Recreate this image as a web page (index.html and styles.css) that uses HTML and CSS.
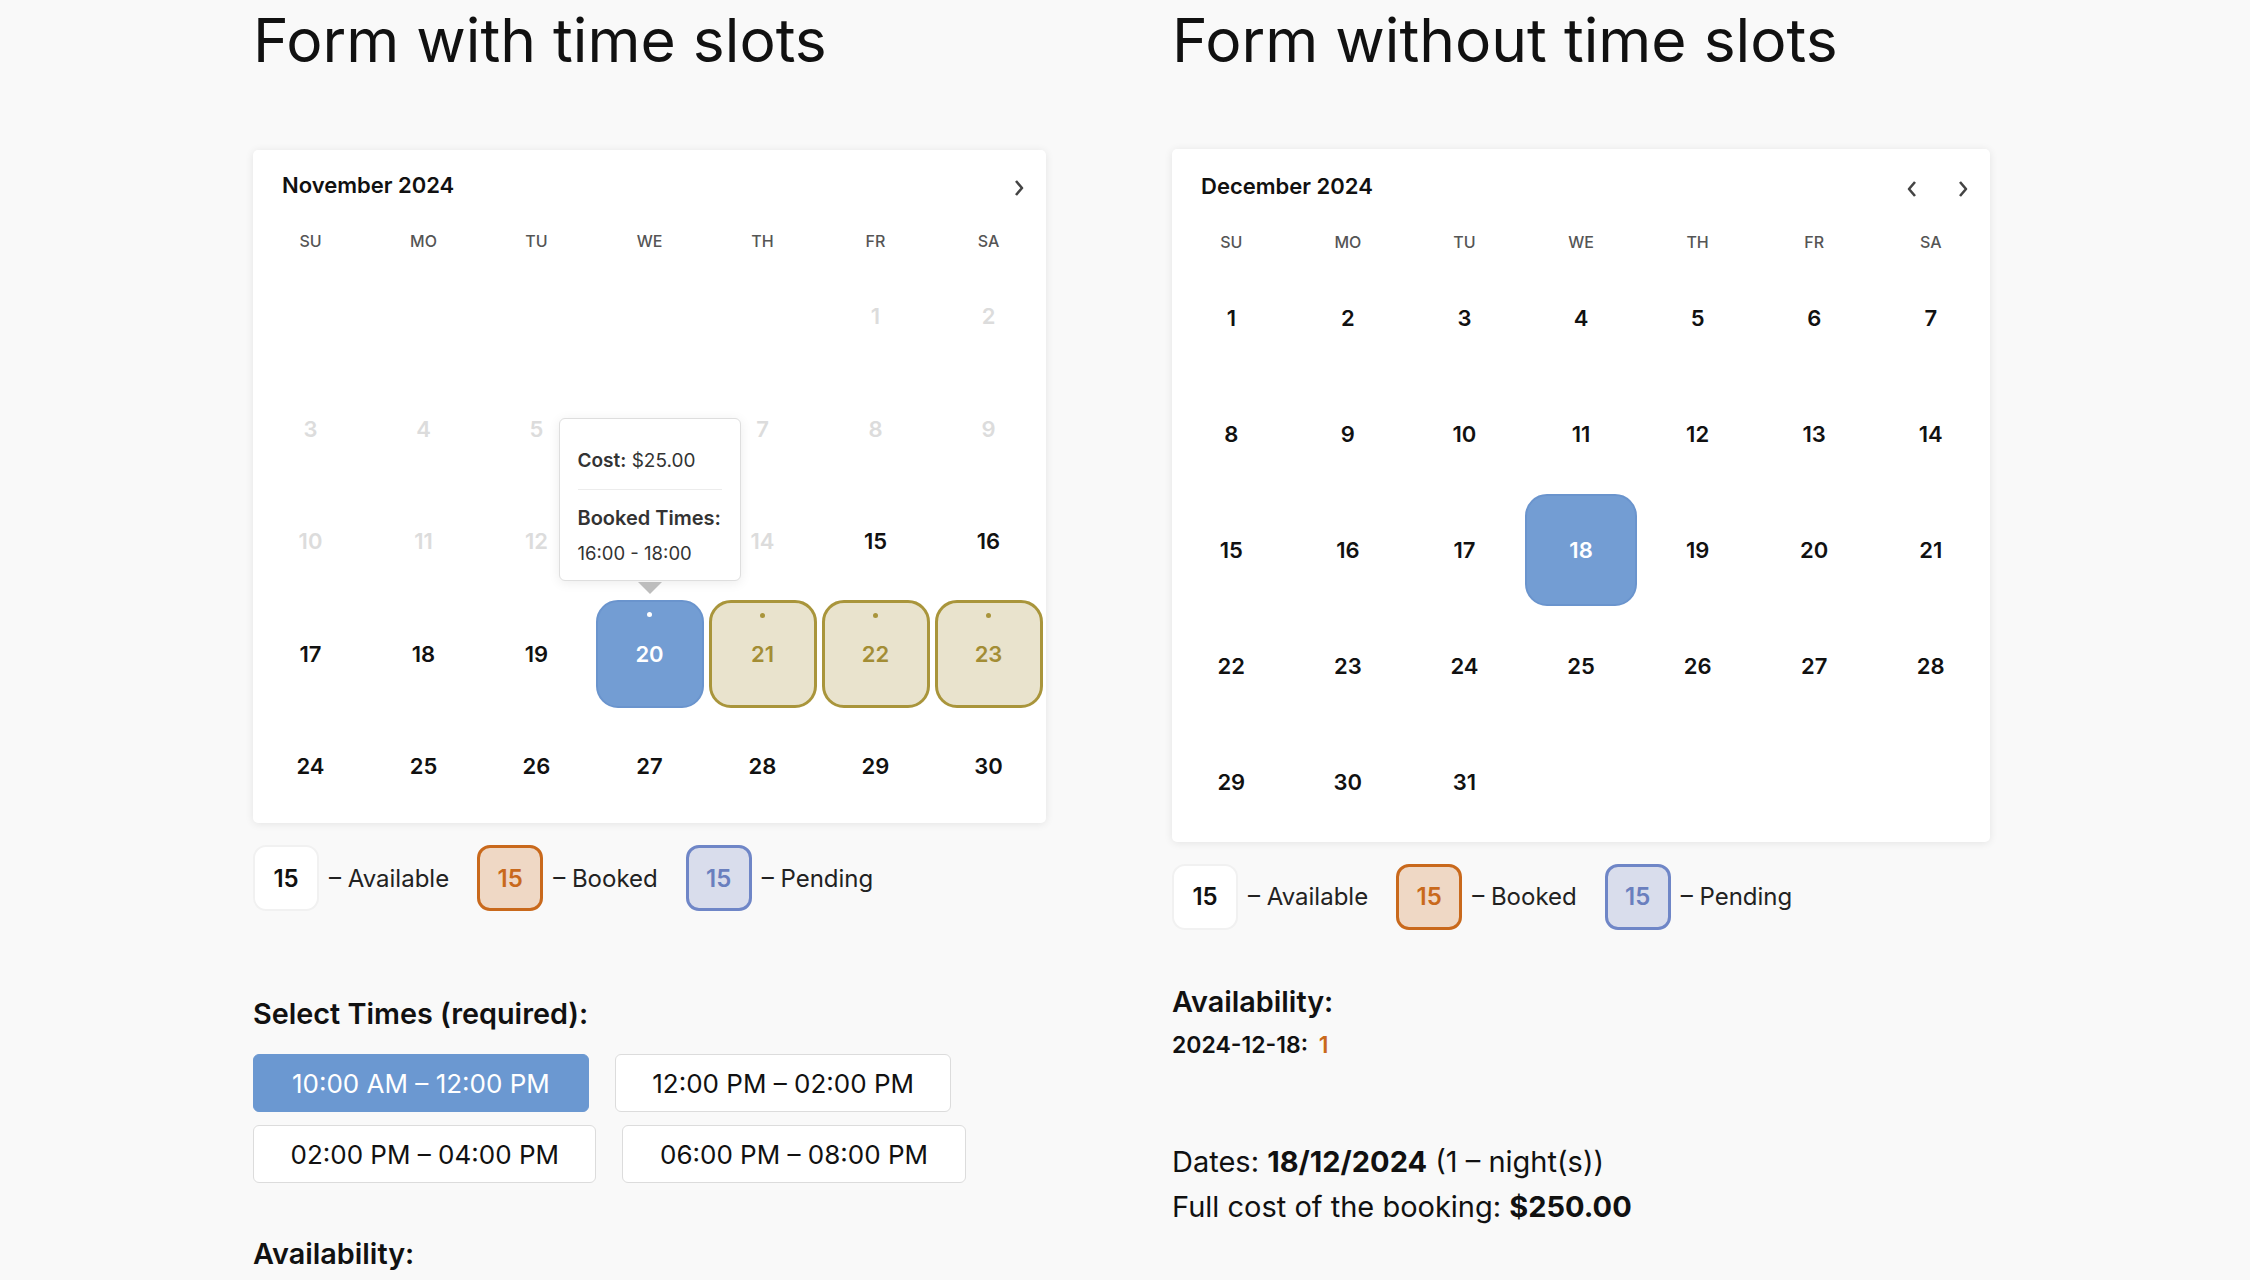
FILE: index.html
```html
<!DOCTYPE html>
<html>
<head>
    <title>Booking forms</title>
    <link rel="stylesheet" href="styles.css">
</head>
<body>
    <div class="page">
        <!-- form with time slots -->
        <section class="col col-slots">
            <h1 class="title">Form with time slots</h1>
            <div class="cal">
                <div class="cal-head">
                    <span class="cal-month">November 2024</span>
                    <div class="cal-nav">
                        <span class="nav-btn"><svg width="10" height="18" viewBox="0 0 10 18"><path d="M2 2 L8 9 L2 16" /></svg></span>
                    </div>
                </div>
                <div class="cal-week">
                    <div>SU</div><div>MO</div><div>TU</div><div>WE</div><div>TH</div><div>FR</div><div>SA</div>
                </div>
                <div class="cal-days">
                    <div class="day"></div><div class="day"></div><div class="day"></div><div class="day"></div><div class="day"></div>
                    <div class="day past">1</div><div class="day past">2</div>
                    <div class="day past">3</div><div class="day past">4</div><div class="day past">5</div><div class="day past">6</div><div class="day past">7</div><div class="day past">8</div><div class="day past">9</div>
                    <div class="day past">10</div><div class="day past">11</div><div class="day past">12</div><div class="day past">13</div><div class="day past">14</div><div class="day">15</div><div class="day">16</div>
                    <div class="day">17</div><div class="day">18</div><div class="day">19</div>
                    <div class="day selected has-dot">20
                        <div class="tip">
                            <div class="tip-cost"><b>Cost:</b> $25.00</div>
                            <div class="tip-label">Booked Times:</div>
                            <div class="tip-time">16:00 - 18:00</div>
                        </div>
                    </div>
                    <div class="day booked has-dot">21</div><div class="day booked has-dot">22</div><div class="day booked has-dot">23</div>
                    <div class="day">24</div><div class="day">25</div><div class="day">26</div><div class="day">27</div><div class="day">28</div><div class="day">29</div><div class="day">30</div>
                </div>
            </div>

            <div class="legend">
                <div class="legend-item"><span class="legend-box available">15</span><span>– Available</span></div>
                <div class="legend-item"><span class="legend-box booked-box">15</span><span>– Booked</span></div>
                <div class="legend-item"><span class="legend-box pending">15</span><span>– Pending</span></div>
            </div>

            <h3 class="label label-times">Select Times (required):</h3>
            <div class="slots">
                <button class="slot active">10:00 AM – 12:00 PM</button>
                <button class="slot">12:00 PM – 02:00 PM</button>
                <button class="slot">02:00 PM – 04:00 PM</button>
                <button class="slot">06:00 PM – 08:00 PM</button>
            </div>
            <h3 class="label label-avail-left">Availability:</h3>
        </section>

        <!-- form without time slots -->
        <section class="col col-plain">
            <h1 class="title">Form without time slots</h1>
            <div class="cal cal-wide">
                <div class="cal-head">
                    <span class="cal-month">December 2024</span>
                    <div class="cal-nav">
                        <span class="nav-btn"><svg width="10" height="18" viewBox="0 0 10 18"><path d="M8 2 L2 9 L8 16" /></svg></span>
                        <span class="nav-btn"><svg width="10" height="18" viewBox="0 0 10 18"><path d="M2 2 L8 9 L2 16" /></svg></span>
                    </div>
                </div>
                <div class="cal-week">
                    <div>SU</div><div>MO</div><div>TU</div><div>WE</div><div>TH</div><div>FR</div><div>SA</div>
                </div>
                <div class="cal-days">
                    <div class="day">1</div><div class="day">2</div><div class="day">3</div><div class="day">4</div><div class="day">5</div><div class="day">6</div><div class="day">7</div>
                    <div class="day">8</div><div class="day">9</div><div class="day">10</div><div class="day">11</div><div class="day">12</div><div class="day">13</div><div class="day">14</div>
                    <div class="day">15</div><div class="day">16</div><div class="day">17</div><div class="day selected">18</div><div class="day">19</div><div class="day">20</div><div class="day">21</div>
                    <div class="day">22</div><div class="day">23</div><div class="day">24</div><div class="day">25</div><div class="day">26</div><div class="day">27</div><div class="day">28</div>
                    <div class="day">29</div><div class="day">30</div><div class="day">31</div><div class="day"></div><div class="day"></div><div class="day"></div><div class="day"></div>
                </div>
            </div>

            <div class="legend">
                <div class="legend-item"><span class="legend-box available">15</span><span>– Available</span></div>
                <div class="legend-item"><span class="legend-box booked-box">15</span><span>– Booked</span></div>
                <div class="legend-item"><span class="legend-box pending">15</span><span>– Pending</span></div>
            </div>

            <h3 class="label label-avail">Availability:</h3>
            <div class="avail-row">2024-12-18: <span class="avail-count">1</span></div>

            <div class="summary">
                <div>Dates: <b>18/12/2024</b> (1 – night(s))</div>
                <div>Full cost of the booking: <b>$250.00</b></div>
            </div>
        </section>
    </div>
</body>
</html>
```

FILE: styles.css
```css
body {
    margin: 0;
    background-color: #f9f9f9;
    font-family: Inter, "Noto Sans", Arial, sans-serif;
    color: #111;
}
.page {
    display: flex;
    padding-left: 253px;
    height: 1280px;
    overflow: hidden;
}
.col-slots {
    width: 919px;
}
.col-plain {
    width: 818px;
}
.title {
    margin: 4px 0 74px;
    font-size: 60.5px;
    line-height: 72px;
    font-weight: 400;
    color: #111;
}

/* calendar card */
.cal {
    width: 793px;
    background: #fff;
    border-radius: 5px;
    box-shadow: 0 1px 8px rgba(0, 0, 0, 0.09);
    padding-bottom: 3px;
}
.cal-wide {
    width: 818px;
    padding-bottom: 4px;
}
.col-plain .cal {
    margin-top: -1px;
}
.cal-head {
    display: flex;
    align-items: center;
    justify-content: space-between;
    height: 70px;
    padding: 0 22px 0 29px;
}
.cal-wide .cal-head {
    padding-top: 2px;
}
.cal-month {
    font-size: 22px;
    font-weight: 600;
    color: #111;
}
.cal-nav {
    display: flex;
    gap: 41px;
    padding-top: 5px;
}
.nav-btn svg {
    display: block;
}
.nav-btn path {
    fill: none;
    stroke: #444;
    stroke-width: 2.6;
    stroke-linejoin: round;
}
.cal-week,
.cal-days {
    display: grid;
    grid-template-columns: repeat(7, 1fr);
    column-gap: 5px;
    margin: 0 3.5px;
}
.cal-week {
    height: 42px;
    align-items: center;
    text-align: center;
    font-size: 16px;
    font-weight: 500;
    color: #555;
}
.cal-wide .cal-week {
    height: 41px;
}
.cal-days {
    row-gap: 4.5px;
}
.day {
    position: relative;
    aspect-ratio: 1;
    display: flex;
    align-items: center;
    justify-content: center;
    font-size: 22px;
    font-weight: 600;
    color: #111;
    border-radius: 22px;
    box-sizing: border-box;
}
.day.past {
    color: #dcdcdc;
}
.day.selected {
    background-color: #739dd3;
    border: 2px solid #6a94cd;
    color: #fff;
}
.day.booked {
    background-color: #e9e3cd;
    border: 3px solid #a9953b;
    color: #a38d35;
}
.day.has-dot::before {
    content: "";
    position: absolute;
    top: 10px;
    left: 50%;
    width: 5px;
    height: 5px;
    margin-left: -2.5px;
    border-radius: 50%;
    background: #a9953b;
}
.day.selected.has-dot::before {
    background: #fff;
}

/* tooltip over day 20 */
.tip {
    position: absolute;
    bottom: calc(100% + 21px);
    left: 50%;
    width: 182px;
    margin-left: -91px;
    box-sizing: border-box;
    padding: 29px 18px 13.5px;
    background: #fff;
    border: 1px solid #dedede;
    border-radius: 6px;
    box-shadow: 0 2px 12px rgba(0, 0, 0, 0.08);
    color: #333;
    font-weight: 400;
    text-align: left;
    z-index: 2;
}
.tip::after {
    content: "";
    position: absolute;
    top: calc(100% + 2px);
    left: 50%;
    margin-left: -12px;
    border-left: 12px solid transparent;
    border-right: 12px solid transparent;
    border-top: 12px solid #bdbdbd;
}
.tip-cost {
    font-size: 19px;
    line-height: 26px;
    padding-bottom: 15px;
    border-bottom: 1px solid #ececec;
    white-space: nowrap;
}
.tip-cost b {
    font-weight: 600;
}
.tip-label {
    margin-top: 14px;
    font-size: 20px;
    font-weight: 600;
    line-height: 28px;
    white-space: nowrap;
}
.tip-time {
    margin-top: 8px;
    font-size: 18.5px;
    line-height: 26px;
    white-space: nowrap;
}

/* legend */
.legend {
    display: flex;
    align-items: center;
    margin-top: 22px;
    font-size: 24px;
    color: #222;
}
.legend-item {
    display: flex;
    align-items: center;
    gap: 10px;
    margin-right: 28px;
}
.legend-box {
    width: 66px;
    height: 66px;
    box-sizing: border-box;
    display: flex;
    align-items: center;
    justify-content: center;
    border-radius: 13px;
    border: 2px solid #f1f1f1;
    background: #fff;
    font-weight: 600;
    color: #111;
}
.legend-box.booked-box {
    background: #efd8c5;
    border: 3px solid #c9691c;
    color: #c9691c;
}
.legend-box.pending {
    background: #d9ddec;
    border: 3px solid #6f86c7;
    color: #6a7fbe;
}

/* labels and time slots */
.label {
    margin: 0;
    font-size: 28.8px;
    line-height: 36px;
    font-weight: 600;
    color: #111;
}
.label-times {
    margin-top: 85px;
}
.label-avail-left {
    margin-top: 53px;
}
.slots {
    display: flex;
    flex-wrap: wrap;
    width: 793px;
    gap: 13px 26px;
    margin-top: 22px;
}
.slot {
    height: 58px;
    padding: 0 36.5px;
    background: #fff;
    border: 1px solid #dcdcdc;
    border-radius: 6px;
    font-family: Inter, "Noto Sans", Arial, sans-serif;
    font-size: 26px;
    color: #111;
    cursor: pointer;
}
.slot.active {
    background: #6b98d1;
    border-color: #6b98d1;
    color: #fff;
    padding: 0 38px;
}

/* right side availability and summary */
.label-avail {
    margin-top: 54.5px;
}
.avail-row {
    margin-top: 10px;
    font-size: 23px;
    line-height: 30px;
    font-weight: 600;
}
.avail-count {
    margin-left: 5px;
    color: #c9691c;
}
.summary {
    margin-top: 79px;
    font-size: 29px;
    line-height: 45px;
    color: #111;
}
.summary b {
    font-weight: 700;
}
```
